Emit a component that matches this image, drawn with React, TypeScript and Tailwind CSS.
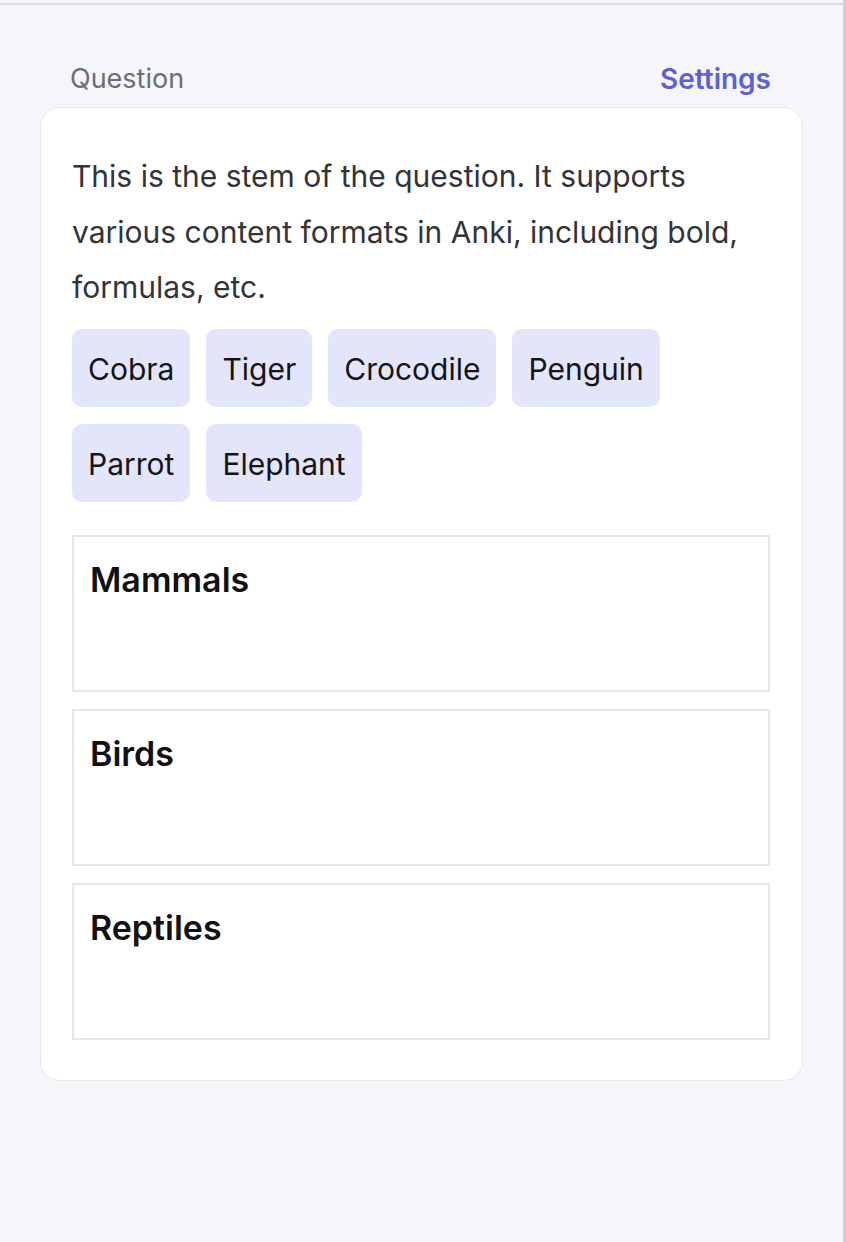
import React from 'react'

const chips = ['Cobra', 'Tiger', 'Crocodile', 'Penguin', 'Parrot', 'Elephant']
const groups = ['Mammals', 'Birds', 'Reptiles']

export default function App() {
  return (
    <div
      className="min-h-[1242px] bg-[#f6f5f9] border-r-[3px] border-[#cfcfd6] pt-[3px]"
      style={{ fontFamily: 'Inter, "Noto Sans", sans-serif' }}
    >
      <div className="border-t-2 border-[#dcdce0] pt-[58px] pl-[40px] pr-[40px]">
        <div className="flex items-center justify-between pl-[30px] pr-[32px] h-[32px] mb-[12px]">
          <span className="text-[27px] text-[#6c6c78]">Question</span>
          <button className="text-[28px] font-semibold text-[#5d5fdb]">Settings</button>
        </div>
        <div className="bg-white rounded-[20px] border-[1.5px] border-[#e8e7ec] pt-[41px] pb-[40px] pl-[31px] pr-[32px]">
          <p className="text-[30px] leading-[55.5px] text-[#333338]">
            This is the stem of the question. It supports various content formats in Anki, including bold,
            formulas, etc.
          </p>
          <div className="flex flex-wrap gap-x-[16px] gap-y-[17px] mt-[13px]">
            {chips.map((c) => (
              <div
                key={c}
                className="h-[78px] flex items-center px-[16px] pt-[3px] rounded-[10px] bg-[#e3e6fb] text-[30px] text-[#141418]"
              >
                {c}
              </div>
            ))}
          </div>
          <div className="flex flex-col gap-[17px] mt-[33px]">
            {groups.map((g) => (
              <div key={g} className="h-[157px] border-2 border-[#e6e6ea] pt-[25px] px-[16px]">
                <h3 className="text-[34px] leading-[36px] font-semibold text-[#111114]">{g}</h3>
              </div>
            ))}
          </div>
        </div>
      </div>
    </div>
  )
}
